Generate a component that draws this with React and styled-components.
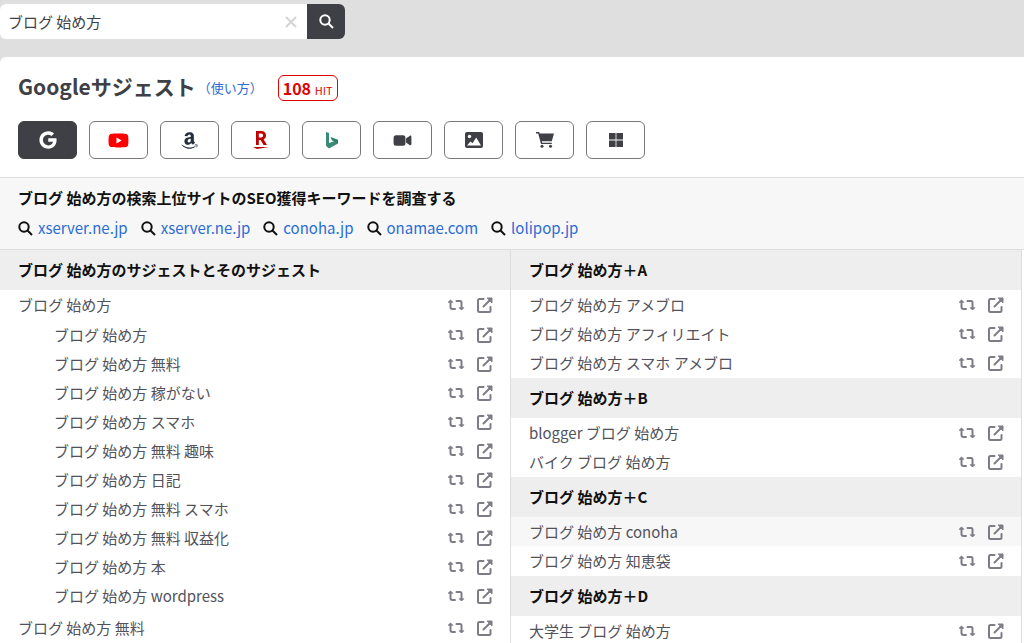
import styled, { createGlobalStyle } from "styled-components";
import { FaYoutube, FaAmazon } from "react-icons/fa";
import { IoVideocam, IoLogoGoogle } from "react-icons/io5";

const FONT = `"Noto Sans CJK JP", sans-serif`;
const DARK = "#3f3f46";
const BLUE = "#2b6cd4";
const RED = "#e00000";
const BORDER = "#dedede";
const HEAD_BG = "#eeeeee";

const sites = ["xserver.ne.jp", "xserver.ne.jp", "conoha.jp", "onamae.com", "lolipop.jp"];

const related = [
    "ブログ 始め方",
    "ブログ 始め方 無料",
    "ブログ 始め方 稼がない",
    "ブログ 始め方 スマホ",
    "ブログ 始め方 無料 趣味",
    "ブログ 始め方 日記",
    "ブログ 始め方 無料 スマホ",
    "ブログ 始め方 無料 収益化",
    "ブログ 始め方 本",
    "ブログ 始め方 wordpress",
];

const groups = [
    { title: "ブログ 始め方＋A", words: ["ブログ 始め方 アメブロ", "ブログ 始め方 アフィリエイト", "ブログ 始め方 スマホ アメブロ"] },
    { title: "ブログ 始め方＋B", words: ["blogger ブログ 始め方", "バイク ブログ 始め方"] },
    { title: "ブログ 始め方＋C", words: ["ブログ 始め方 conoha", "ブログ 始め方 知恵袋"], active: 0 },
    { title: "ブログ 始め方＋D", words: ["大学生 ブログ 始め方"] },
];

const SearchIcon = () => (
    <svg width="15" height="15" viewBox="0 0 15 15" fill="none" stroke="currentColor" strokeWidth="2" aria-hidden="true">
        <circle cx="6" cy="6" r="4.700" />
        <path d="M9.500 9.500l4.500 4.500" />
    </svg>
);

const RakutenIcon = () => (
    <svg width="18" height="20" viewBox="0 0 18 20" fill="#bf0000" aria-hidden="true">
        <path fillRule="evenodd" d="M4 1h5.200c3 0 4.800 1.700 4.800 4.400 0 1.800-.9 3.200-2.400 3.900L15 15h-3.400L8.600 10H6.800v5H4zm2.800 2.600v3.900h2.300c1.200 0 2-.8 2-2s-.8-1.900-2-1.900z" />
        <path d="M1 17h16l-12 2z" />
    </svg>
);

const BingIcon = () => (
    <svg width="14" height="18" viewBox="0 0 14 18" aria-hidden="true">
        <path d="M1 1l3 1v11l-3 2z" fill="#3a8a78" />
        <path d="M1 15l3-3 9-3v3.500L4 17.500z" fill="#3a8a78" />
        <path d="M5.500 6L13 8.700v3.500L9.500 10.500 7 9.500z" fill="#2f7d6c" />
    </svg>
);

const ImageIcon = () => (
    <svg width="18" height="16" viewBox="0 0 18 16" aria-hidden="true">
        <rect x="0" y="0" width="18" height="16" rx="2" fill="currentColor" />
        <circle cx="4.500" cy="4.500" r="1.700" fill="#fff" />
        <path d="M2 13.500l3.500-4 2 1.700 3.700-5.700L16 13.500z" fill="#fff" />
    </svg>
);

const CartIcon = () => (
    <svg width="18" height="16" viewBox="0 0 18 16" fill="currentColor" aria-hidden="true">
        <path d="M0 0h3.200l.5 1.500H18l-2.200 7.800H5.800l.4 1.400h9.600V12H5L2.200 1.500H0z" />
        <circle cx="6" cy="14.300" r="1.500" />
        <circle cx="14.500" cy="14.300" r="1.500" />
    </svg>
);

const TilesIcon = () => (
    <svg width="14" height="14" viewBox="0 0 14 14" fill="currentColor" aria-hidden="true">
        <path d="M0 0h6.600v6.600H0zM7.400 0H14v6.600H7.400zM0 7.400h6.600V14H0zM7.400 7.400H14V14H7.400z" />
    </svg>
);

const RepeatIcon = () => (
    <svg width="18" height="12" viewBox="0 0 18 12" fill="none" stroke="currentColor" strokeWidth="2" strokeLinecap="round" strokeLinejoin="round" aria-hidden="true">
        <path d="M3.500 3v5q0 2 2 2H8M9.500 2H13q1.500 0 1.500 1.500V8" />
        <path d="M1.500 3l2-2 2 2zM12.500 9l2 2 2-2z" fill="currentColor" strokeWidth="1" />
    </svg>
);

const OpenIcon = () => (
    <svg width="16" height="16" viewBox="0 0 16 16" fill="none" stroke="currentColor" strokeWidth="2" strokeLinecap="round" strokeLinejoin="round" aria-hidden="true">
        <path d="M6.500 2H2.500Q1 2 1 3.500v10Q1 15 2.500 15h9.500q1.500 0 1.500-1.500V10" />
        <path d="M6.500 9.500L12.500 3.500" />
        <path d="M10.500 1H15v4.500z" fill="currentColor" strokeWidth="1" />
    </svg>
);

const engines = [
    { name: "Google", icon: <IoLogoGoogle size={20} />, active: true },
    { name: "YouTube", icon: <FaYoutube size={21} color="#ff0000" /> },
    { name: "Amazon", icon: <FaAmazon size={19} color="#232f3e" /> },
    { name: "楽天", icon: <RakutenIcon /> },
    { name: "Bing", icon: <BingIcon /> },
    { name: "動画", icon: <IoVideocam size={19} /> },
    { name: "画像", icon: <ImageIcon /> },
    { name: "ショッピング", icon: <CartIcon /> },
    { name: "Microsoft", icon: <TilesIcon /> },
];

const Keyword = ({ text, indent, active, children }) => (
    <Item>
        <Row $indent={indent} $active={active}>
            <Word href="#">{text}</Word>
            <Action type="button" aria-label={`${text} を再検索`}><RepeatIcon /></Action>
            <Action type="button" aria-label={`${text} を開く`}><OpenIcon /></Action>
        </Row>
        {children}
    </Item>
);

export default function App() {
    return (
        <>
            <GlobalStyle />
            <SearchBar onSubmit={(e) => e.preventDefault()}>
                <Field>
                    <SearchInput aria-label="キーワード" defaultValue="ブログ 始め方" />
                    <ClearButton type="reset" aria-label="クリア">
                        <svg width="12" height="12" viewBox="0 0 12 12" stroke="currentColor" strokeWidth="2" aria-hidden="true">
                            <path d="M1 1l10 10M11 1L1 11" />
                        </svg>
                    </ClearButton>
                </Field>
                <SearchButton type="submit" aria-label="検索"><SearchIcon /></SearchButton>
            </SearchBar>
            <Panel>
                <TitleRow>
                    <Title>Googleサジェスト</Title>
                    <HelpLink href="#">（使い方）</HelpLink>
                    <Hits>108 <small>HIT</small></Hits>
                </TitleRow>
                <Engines>
                    {engines.map(({ name, icon, active }) => (
                        <EngineButton key={name} type="button" aria-label={name} $active={active}>{icon}</EngineButton>
                    ))}
                </Engines>
                <Survey>
                    <SurveyTitle>ブログ 始め方の検索上位サイトのSEO獲得キーワードを調査する</SurveyTitle>
                    <Sites>
                        {sites.map((site, i) => (
                            <Site key={i}>
                                <SearchIcon />
                                <a href="#">{site}</a>
                            </Site>
                        ))}
                    </Sites>
                </Survey>
                <Columns>
                    <Column>
                        <GroupTitle>ブログ 始め方のサジェストとそのサジェスト</GroupTitle>
                        <List>
                            <Keyword text="ブログ 始め方">
                                <SubList>
                                    {related.map((word) => <Keyword key={word} text={word} indent />)}
                                </SubList>
                            </Keyword>
                            <Keyword text="ブログ 始め方 無料" />
                        </List>
                    </Column>
                    <Column>
                        {groups.map(({ title, words, active }) => (
                            <section key={title}>
                                <GroupTitle>{title}</GroupTitle>
                                <List>
                                    {words.map((word, i) => <Keyword key={word} text={word} active={i === active} />)}
                                </List>
                            </section>
                        ))}
                    </Column>
                </Columns>
            </Panel>
        </>
    );
}

const GlobalStyle = createGlobalStyle`
    * {
        box-sizing: border-box;
    }

    html {
        height: 100%;
        overflow: hidden;
    }

    body {
        margin: 0;
        height: 100%;
        overflow: hidden;
        background-color: #dfdfdf;
        color: ${DARK};
        font-family: ${FONT};
        font-size: 15px;
    }

    button, input {
        font-family: inherit;
        color: inherit;
    }

    a {
        color: ${BLUE};
        text-decoration: none;
    }

    svg {
        display: block;
        flex: none;
    }
`;

const SearchBar = styled.form`
    display: flex;
    width: 345px;
    max-width: 100%;
    height: 35px;
    margin: 4px 0 18px;
    border-radius: 6px;
    overflow: hidden;
`;

const Field = styled.div`
    flex: 1;
    display: flex;
    align-items: center;
    background-color: #fff;
`;

const SearchInput = styled.input`
    flex: 1;
    min-width: 0;
    height: 100%;
    padding: 0 8px;
    border: 0;
    outline: 0;
    background: none;
    font-size: 15px;
`;

const ClearButton = styled.button`
    padding: 0 10px;
    border: 0;
    background: none;
    color: #d4d4d4;
`;

const SearchButton = styled.button`
    display: flex;
    align-items: center;
    justify-content: center;
    width: 38px;
    padding: 0;
    border: 0;
    background-color: ${DARK};
    color: #fff;
`;

const Panel = styled.main`
    background-color: #fff;
    border-radius: 6px 0 0 0;
    overflow: hidden;
`;

const TitleRow = styled.header`
    display: flex;
    align-items: center;
    padding: 18px 18px 0;
`;

const Title = styled.h1`
    margin: 0 2px 0 0;
    padding-bottom: 4px;
    font-size: 21px;
    line-height: 22px;
`;

const HelpLink = styled.a`
    margin-right: 15px;
    font-size: 13px;
    line-height: 26px;
`;

const Hits = styled.span`
    padding: 0 4px;
    border: 1px solid ${RED};
    border-radius: 6px;
    color: ${RED};
    font-size: 16px;
    font-weight: 700;
    line-height: 24px;

    small {
        font-size: 11px;
        font-weight: 400;
        line-height: 1;
    }
`;

const Engines = styled.nav`
    display: flex;
    flex-wrap: wrap;
    gap: 12px;
    padding: 20px 18px 18px;
`;

const EngineButton = styled.button`
    display: flex;
    align-items: center;
    justify-content: center;
    width: 59px;
    height: 38px;
    padding: 0;
    border: 1px solid ${({ $active }) => ($active ? DARK : "#77777c")};
    border-radius: 6px;
    background-color: ${({ $active }) => ($active ? DARK : "#fff")};
    color: ${({ $active }) => ($active ? "#fff" : DARK)};
`;

const Survey = styled.section`
    padding: 8px 18px 9px;
    border: solid ${BORDER};
    border-width: 1px 0;
    background-color: #f7f7f7;
    color: #111;
`;

const SurveyTitle = styled.h2`
    margin: 0 0 6px;
    font-size: 15px;
    line-height: 24px;
`;

const Sites = styled.ul`
    display: flex;
    flex-wrap: wrap;
    gap: 13px;
    margin: 0;
    padding: 0;
    list-style: none;
`;

const Site = styled.li`
    display: flex;
    align-items: center;
    gap: 5px;
    line-height: 24px;
`;

const Columns = styled.div`
    display: grid;
    grid-template-columns: 1fr 1fr;
    padding-right: 2px;
`;

const Column = styled.div`
    border-right: 1px solid ${BORDER};
`;

const GroupTitle = styled.h2`
    margin: 0;
    padding: 0 18px;
    background-color: ${HEAD_BG};
    color: #111;
    font-size: 15px;
    line-height: 40px;
`;

const List = styled.ul`
    margin: 0;
    padding: 0 0 1px;
    list-style: none;
`;

const SubList = styled(List)`
    padding: 1px 0 3px;
`;

const Item = styled.li`
    margin: 0;
`;

const Row = styled.div`
    display: flex;
    align-items: center;
    gap: 12px;
    height: 29px;
    padding: 0 17px 0 ${({ $indent }) => ($indent ? "54px" : "18px")};
    background-color: ${({ $active }) => ($active ? "#f7f7f7" : "transparent")};
`;

const Word = styled.a`
    flex: 1;
    color: #52525b;
`;

const Action = styled.button`
    padding: 0;
    border: 0;
    background: none;
    color: #7c7c87;
`;
